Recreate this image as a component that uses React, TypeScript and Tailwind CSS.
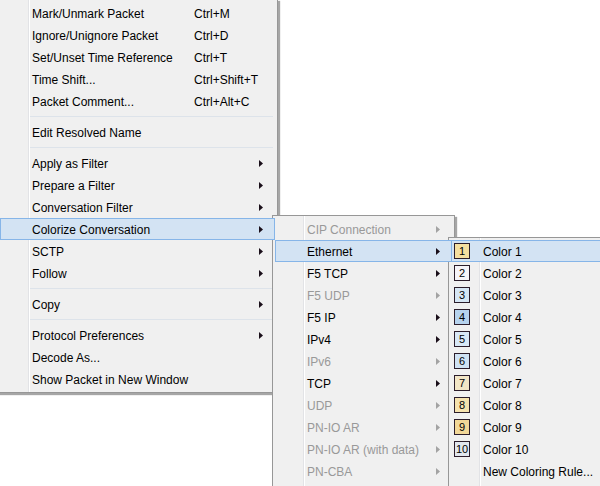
type Item =
  | { sep: true }
  | {
      sep?: false;
      label: string;
      shortcut?: string;
      arrow?: boolean;
      disabled?: boolean;
      active?: boolean;
      swatch?: { n: number; bg: string };
    };

const mainItems: Item[] = [
  { label: "Mark/Unmark Packet", shortcut: "Ctrl+M" },
  { label: "Ignore/Unignore Packet", shortcut: "Ctrl+D" },
  { label: "Set/Unset Time Reference", shortcut: "Ctrl+T" },
  { label: "Time Shift...", shortcut: "Ctrl+Shift+T" },
  { label: "Packet Comment...", shortcut: "Ctrl+Alt+C" },
  { sep: true },
  { label: "Edit Resolved Name" },
  { sep: true },
  { label: "Apply as Filter", arrow: true },
  { label: "Prepare a Filter", arrow: true },
  { label: "Conversation Filter", arrow: true },
  { label: "Colorize Conversation", arrow: true, active: true },
  { label: "SCTP", arrow: true },
  { label: "Follow", arrow: true },
  { sep: true },
  { label: "Copy", arrow: true },
  { sep: true },
  { label: "Protocol Preferences", arrow: true },
  { label: "Decode As..." },
  { label: "Show Packet in New Window" },
];

const protoItems: Item[] = [
  { label: "CIP Connection", arrow: true, disabled: true },
  { label: "Ethernet", arrow: true, active: true },
  { label: "F5 TCP", arrow: true },
  { label: "F5 UDP", arrow: true, disabled: true },
  { label: "F5 IP", arrow: true },
  { label: "IPv4", arrow: true },
  { label: "IPv6", arrow: true, disabled: true },
  { label: "TCP", arrow: true },
  { label: "UDP", arrow: true, disabled: true },
  { label: "PN-IO AR", arrow: true, disabled: true },
  { label: "PN-IO AR (with data)", arrow: true, disabled: true },
  { label: "PN-CBA", arrow: true, disabled: true },
  { label: "", arrow: true, disabled: true },
];

const swatches = [
  "#f5dfa0",
  "#f6f4f8",
  "#d6e6f4",
  "#b6d3ee",
  "#d8e8f6",
  "#cfe2f3",
  "#f2e6c6",
  "#f5e2ae",
  "#f2d898",
  "#e2e7ee",
];

const colorItems: Item[] = [
  ...swatches.map((bg, i) => ({
    label: `Color ${i + 1}`,
    active: i === 0,
    swatch: { n: i + 1, bg },
  })),
  { label: "New Coloring Rule..." },
];

const Arrow = ({ disabled }: { disabled?: boolean }) => (
  <svg width="4" height="7" viewBox="0 0 4 7" className="ml-auto mr-[11px] shrink-0">
    <path d="M0 0 L4 3.5 L0 7 Z" fill={disabled ? "#a3a3a3" : "#1a0f1a"} />
  </svg>
);

const Row = ({ item }: { item: Item }) => {
  if (item.sep) {
    return (
      <div className="flex h-[9px] items-center pl-[28px] pr-[2px]">
        <div className="h-px w-full bg-[#dde3ea]" />
      </div>
    );
  }
  return (
    <div
      className={
        "relative z-10 flex h-[22px] items-center border " +
        (item.active ? "border-[#86b5e8] bg-[#d3e3f3]" : "border-transparent") +
        (item.disabled ? " text-[#999999]" : " text-black")
      }
    >
      <div className="flex w-[31px] shrink-0 items-center pl-[2px]">
        {item.swatch && (
          <div
            className="flex h-[16px] w-[16px] items-center justify-center border border-[#2b1d2b] text-[11px] leading-none"
            style={{ backgroundColor: item.swatch.bg }}
          >
            {item.swatch.n}
          </div>
        )}
      </div>
      <span
        className={
          "mt-[2px] whitespace-nowrap" + (item.shortcut ? " w-[162px] shrink-0" : "")
        }
      >
        {item.label}
      </span>
      {item.shortcut && (
        <span className="mt-[2px] whitespace-nowrap">{item.shortcut}</span>
      )}
      {item.arrow && <Arrow disabled={item.disabled} />}
    </div>
  );
};

const Menu = ({ items, className }: { items: Item[]; className: string }) => (
  <div
    className={
      "absolute flex flex-col border border-[#979797] bg-[#f0f0f0] p-[2px] shadow-[2px_2px_1px_rgba(0,0,0,0.35)] " +
      className
    }
  >
    <div className="absolute bottom-0 left-[30px] top-0 w-px bg-[#e2e3e6]" />
    <div className="absolute bottom-0 left-[31px] top-0 w-px bg-white" />
    {items.map((item, i) => (
      <Row key={i} item={item} />
    ))}
  </div>
);

export default function App() {
  return (
    <div className="relative h-[486px] w-[600px] overflow-hidden bg-white font-['Liberation_Sans',Arial,sans-serif] text-[12px]">
      <Menu items={mainItems} className="left-[-3px] top-[-1px] w-[281px]" />
      <Menu items={protoItems} className="left-[272px] top-[215px] w-[183px]" />
      <Menu items={colorItems} className="left-[448px] top-[237px] w-[200px] pb-[10px]" />
    </div>
  );
}
